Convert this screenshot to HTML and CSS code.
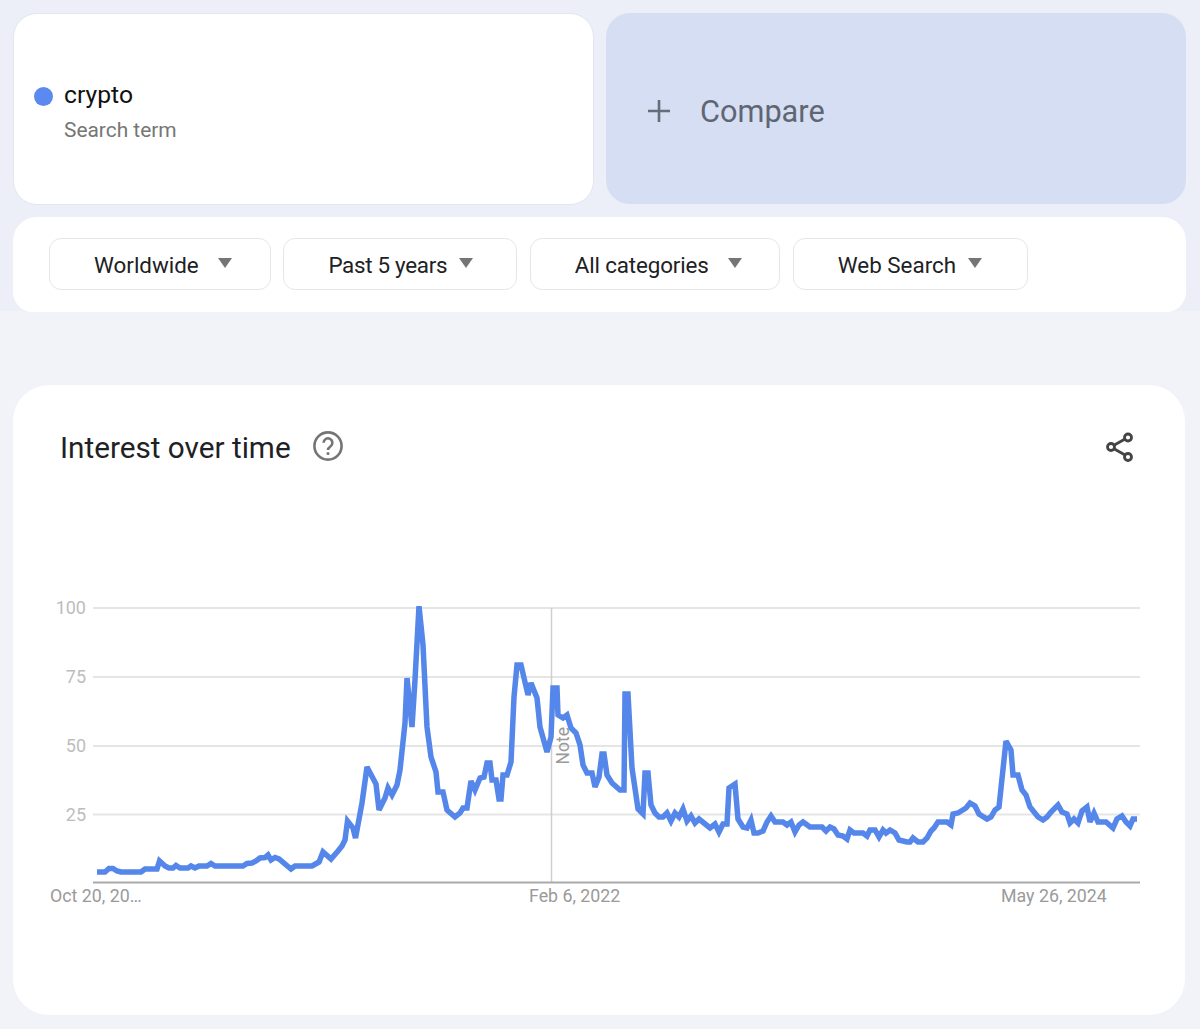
FILE: index.html
```html
<!DOCTYPE html>
<html lang="en">
<head>
<meta charset="utf-8">
<title>Google Trends – crypto</title>
<link rel="stylesheet" href="styles.css">
</head>
<body>
<header class="top">
  <div class="terms">
    <div class="term-card">
      <span class="dot"></span>
      <div class="term-text">
        <div class="term-name">crypto</div>
        <div class="term-kind">Search term</div>
      </div>
    </div>
    <div class="compare-card">
      <svg class="plus" viewBox="0 0 22 22" width="22" height="22"><path d="M11 0V22M0 11H22"/></svg>
      <span class="compare-label">Compare</span>
    </div>
  </div>
  <div class="filters">
    <div class="filter"><span>Worldwide</span><i class="caret caret-wide"></i></div>
    <div class="filter"><span class="tight">Past 5 years</span><i class="caret"></i></div>
    <div class="filter"><span class="snug">All categories</span><i class="caret caret-wide"></i></div>
    <div class="filter"><span>Web Search</span><i class="caret"></i></div>
  </div>
</header>
<main class="main">
  <section class="chart-card">
    <div class="chart-head">
      <h2 class="chart-title">Interest over time</h2>
      <svg class="help" viewBox="0 0 30 30" width="30" height="30">
        <circle cx="15" cy="15" r="13.6"/>
        <path d="M10.6 11.8a4.4 4.4 0 1 1 7 3.5c-1.5 1.1-2.6 1.9-2.6 3.7"/>
        <circle class="help-dot" cx="15" cy="22.4" r="1.5"/>
      </svg>
      <svg class="share" viewBox="0 0 30 30" width="30" height="30">
        <path d="M19.6 7.300L9.400 13M9.400 17L19.600 22.700"/>
        <circle cx="23" cy="5.500" r="3.500"/>
        <circle cx="6" cy="15" r="3.500"/>
        <circle cx="23" cy="25" r="3.500"/>
      </svg>
    </div>
    <svg class="chart" viewBox="13 590 1172 330" width="1172" height="330">
      <defs><clipPath id="plot"><rect x="90" y="606" width="1052" height="280"/></clipPath></defs>
      <g class="grid">
        <path d="M93 608H1140M93 677H1140M93 746H1140M93 814.500H1140"/>
      </g>
      <path class="marker" d="M551.500 608V882"/>
      <path class="axis" d="M93 882.500H1140"/>
      <g class="ylabels">
        <text x="86" y="614">100</text>
        <text x="86" y="683">75</text>
        <text x="86" y="752">50</text>
        <text x="86" y="821">25</text>
      </g>
      <g class="xlabels">
        <text x="50" y="902">Oct 20, 20…</text>
        <text x="529" y="902">Feb 6, 2022</text>
        <text x="1001" y="902">May 26, 2024</text>
      </g>
      <text class="note" transform="translate(568.500 764.500) rotate(-90)">Note</text>
      <polyline class="trend" clip-path="url(#plot)" points="97,872 105,872 109,868.500 113,868.500 117,871 121,872 141,872 145,869 157,869 159.500,861 165,866 169,868 173,868 176,865.500 180,868 188,868 191,866 195,868 199,866 207,866 211,863.500 215,866 243,866 247,863.500 252,863 256,861 260,858 265,857.500 268,855 271,860 275,857.500 279,859 291,869 295,866 312,866 319,862 323,852 331,859 338,851 342,846 345,840 347.500,821 353,828 355.500,838 362,803 367,767 376,784 379,810 385,798 388,788 392,795 397,785 400,770 405,723 407,678 412,727 415,680 419,606 423,645 427,727 431,757 436,772 438,792 443,792 447,810 455,817 460,813 463,808 467,808 471,781 475,790 480,778 484,777 487,763 490,763 492,780 496,780 499,799 501,799 503,775 507,775 511,762 514,697 517,665 521,665 528,695 531,683 537,698 540,727 547,752 551,737 553,688 557,688 558,715 563,718 567,715 571,728 576,733 580,745 583,765 587,773 592,773 595,787 599,777 602,754 604,754 607,775 612,783 620,790 624,790 625,694 628,694 632,768 638,809 643,814 645,773 648,773 651,805 655,813 659,817 663,817 667,813 671,821 675,813 679,817 683,809 687,821 691,816 695,823 699,819 710,828 715,824 719,832 723,824 727,824 729,788 735,784 738,819 743,827 747,828 751,820 754,833 758,833 763,831 767,822 771,816 775,822 783,822 787,825 791,822 795,832 799,825 803,822 810,827 822,827 826,831 830,827 834,829 838,835 843,836 847,839 850,830 854,833 863,833 867,836 870,830 875,830 879,837 883,830 886,833 890,830 895,833 899,840 907,842 910,842 913,838 918,842 923,842 927,838 931,831 934,828 938,822 947,822 951,825 953,814 958,813 966,808 970,803 975,806 979,814 987,819 991,817 995,810 999,807 1006,741 1011,750 1013,775 1018,775 1022,790 1026,795 1030,807 1038,817 1043,820 1047,817 1051,812 1058,805 1062,812 1067,814 1070,823 1074,819 1078,823 1082,811 1087,807 1090,822 1094,813 1098,822 1106,822 1113,828 1117,819 1122,816 1126,822 1130,826 1133,819 1137,819"/>
    </svg>
  </section>
</main>
</body>
</html>
```

FILE: styles.css
```css
* { box-sizing: border-box; }
html, body { margin: 0; padding: 0; }
body {
  background: #f1f3f9;
  font-family: "Roboto", "Liberation Sans", sans-serif;
  width: 1200px;
  height: 1029px;
  overflow: hidden;
}
.top {
  background: #eceff8;
  height: 311px;
  padding: 13px 14px 0 13px;
}
.terms {
  display: grid;
  grid-template-columns: 581px 580px;
  column-gap: 12px;
  height: 192px;
}
.term-card {
  background: #fff;
  border: 1px solid #e3e6f0;
  border-radius: 24px;
  display: flex;
  align-items: flex-start;
  padding: 66px 0 0 20px;
  gap: 11px;
}
.dot {
  width: 19px;
  height: 19px;
  border-radius: 50%;
  background: #5a8aef;
  margin-top: 7px;
}
.term-name {
  font-size: 24.700px;
  line-height: 30px;
  color: #111;
}
.term-kind {
  font-size: 20.900px;
  line-height: 30px;
  margin-top: 5px;
  color: #767676;
}
.compare-card {
  background: #d5def3;
  border-radius: 24px;
  display: flex;
  align-items: center;
  padding: 6px 0 0 42px;
  height: 191px;
}
.plus { fill: none; stroke: #666c78; stroke-width: 2.6; margin-top: -1px; }
.compare-label {
  margin-left: 30px;
  font-size: 30.700px;
  color: #5f6672;
}
.filters {
  background: #fff;
  margin: 12px 0 0 0;
  height: 95px;
  border-radius: 24px 24px 20px 20px;
  display: grid;
  grid-template-columns: 222px 234px 250.600px 235px;
  column-gap: 12.400px;
  padding: 21px 0 0 36px;
}
.filter {
  height: 52px;
  border: 1px solid #e6e6ec;
  border-radius: 12px;
  display: flex;
  align-items: center;
  padding: 2px 0 0 44px;
  font-size: 22.400px;
  color: #202124;
}
.tight { letter-spacing: -0.300px; }
.snug { letter-spacing: -0.150px; }
.caret {
  width: 0;
  height: 0;
  border-left: 7.500px solid transparent;
  border-right: 7.500px solid transparent;
  border-top: 10px solid #757575;
  margin: -5px 0 0 12px;
}
.caret-wide { margin-left: 19px; }
.main { padding: 74px 15px 0 13px; }
.chart-card {
  background: #fff;
  border-radius: 36px;
  height: 630px;
  width: 1172px;
}
.chart-head {
  display: flex;
  align-items: flex-start;
  height: 205px;
  padding: 45px 50px 0 47px;
}
.chart-title {
  margin: 0;
  font-size: 29.700px;
  line-height: 36px;
  font-weight: 400;
  color: #202124;
}
.help { margin: 1px 0 0 22px; fill: none; stroke: #757575; stroke-width: 2.6; }
.help-dot { fill: #757575; stroke: none; }
.share { margin: 2px 0 0 auto; fill: none; stroke: #444; stroke-width: 2.8; }
.chart { display: block; }
.grid path { fill: none; stroke: #e5e5e5; stroke-width: 2; }
.marker { fill: none; stroke: #cfcfcf; stroke-width: 1.500; }
.axis { fill: none; stroke: #a9a9a9; stroke-width: 2; }
.ylabels text { font-size: 18px; fill: #bdbdbd; text-anchor: end; }
.xlabels text { font-size: 17.800px; fill: #9a9a9a; }
.note { font-size: 17.500px; fill: #9a9a9a; }
.trend {
  fill: none;
  stroke: #5586ea;
  stroke-width: 5.500;
  stroke-linejoin: miter;
  stroke-miterlimit: 3;
}
```
